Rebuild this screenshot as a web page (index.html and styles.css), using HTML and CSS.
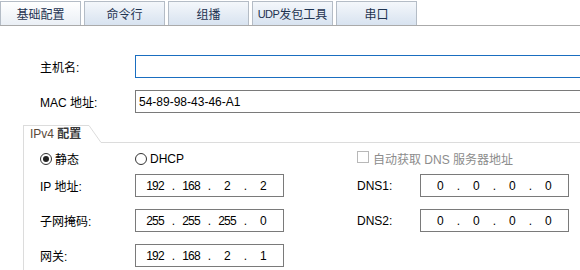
FILE: index.html
```html
<!DOCTYPE html>
<html lang="zh-CN">
<head>
  <meta charset="UTF-8" />
  <title>基础配置</title>
  <link rel="stylesheet" href="styles.css">
</head>
<body>

<div class="tabs">
  <div class="tab active">基础配置</div>
  <div class="tab">命令行</div>
  <div class="tab">组播</div>
  <div class="tab"><span class="latin">UDP</span>发包工具</div>
  <div class="tab">串口</div>
</div>

<div class="form">
  <div class="row">
    <span class="label">主机名:</span>
    <div class="field wide focus"></div>
  </div>
  <div class="row">
    <span class="label">MAC 地址:</span>
    <div class="field wide">54-89-98-43-46-A1</div>
  </div>
</div>

<div class="group">
  <div class="group-head">
    <div class="group-title"><span class="latin">IPv4</span> <b>配置</b></div>
    <svg class="slant" width="12" height="18" viewBox="0 0 12 18">
      <line x1="0" y1="0.5" x2="12" y2="17.5" stroke="#dcdcdc" stroke-width="1" />
    </svg>
    <div class="group-line"></div>
  </div>

  <div class="group-body">
    <div class="grid radios">
      <label class="radio"><span class="circle checked"></span><span>静态</span></label>
      <label class="radio"><span class="circle"></span><span class="latin">DHCP</span></label>
      <label class="check"><span class="box"></span><span>自动获取 DNS 服务器地址</span></label>
    </div>

    <div class="grid fields">
      <span class="label">IP 地址:</span>
      <div class="field ip">
        <span class="oct">192</span><span class="dot">.</span><span class="oct">168</span><span class="dot">.</span><span class="oct">2</span><span class="dot">.</span><span class="oct">2</span>
      </div>
      <span class="label dns">DNS1:</span>
      <div class="field ip">
        <span class="oct">0</span><span class="dot">.</span><span class="oct">0</span><span class="dot">.</span><span class="oct">0</span><span class="dot">.</span><span class="oct">0</span>
      </div>

      <span class="label">子网掩码:</span>
      <div class="field ip">
        <span class="oct">255</span><span class="dot">.</span><span class="oct">255</span><span class="dot">.</span><span class="oct">255</span><span class="dot">.</span><span class="oct">0</span>
      </div>
      <span class="label dns">DNS2:</span>
      <div class="field ip">
        <span class="oct">0</span><span class="dot">.</span><span class="oct">0</span><span class="dot">.</span><span class="oct">0</span><span class="dot">.</span><span class="oct">0</span>
      </div>

      <span class="label">网关:</span>
      <div class="field ip">
        <span class="oct">192</span><span class="dot">.</span><span class="oct">168</span><span class="dot">.</span><span class="oct">2</span><span class="dot">.</span><span class="oct">1</span>
      </div>
    </div>
  </div>
</div>

</body>
</html>
```

FILE: styles.css
```css
body {
  margin: 0;
  height: 270px;
  background: #ffffff;
  font-family: "Liberation Sans", "Noto Sans CJK SC", sans-serif;
  font-size: 12px;
  color: #000000;
  overflow: hidden;
}

/* tab strip */
.tabs {
  display: flex;
  gap: 3px;
  padding-top: 1px;
  border-bottom: 1px solid #aaaaaa;
  box-sizing: border-box;
  height: 26px;
}

.tab {
  width: 81px;
  height: 24px;
  box-sizing: border-box;
  border: 1px solid #b4bcc6;
  border-bottom: none;
  background: linear-gradient(#f4f7fb, #d8e3f0);
  color: #1e3350;
  font-size: 12px;
  display: flex;
  align-items: center;
  justify-content: center;
}

.tab.active {
  background: linear-gradient(#ffffff, #eaeff5);
}

.tab .latin {
  font-size: 11px;
  letter-spacing: -0.5px;
}

/* host / mac rows */
.form {
  padding: 29px 0 0 40px;
  display: flex;
  flex-direction: column;
  gap: 12px;
}

.row {
  display: flex;
  align-items: center;
}

.row .label {
  width: 95px;
  flex: none;
}

.field {
  height: 23px;
  box-sizing: border-box;
  border: 1px solid #7a7a7a;
  background: #ffffff;
  display: flex;
  align-items: center;
}

.field.wide {
  width: 470px;
  flex: none;
  padding-left: 3px;
}

.field.focus {
  border-color: #1a6ec0;
}

/* ipv4 group */
.group {
  margin: 12px 0 0 23px;
}

.group-head {
  display: flex;
  height: 18px;
}

.group-title {
  width: 66px;
  height: 18px;
  box-sizing: border-box;
  border-top: 1px solid #dcdcdc;
  border-left: 1px solid #dcdcdc;
  padding-left: 6px;
  color: #3a3a3a;
  line-height: 17px;
}

.group-title .latin {
  color: #5a4a3a;
}

.group-title b {
  font-weight: bold;
}

.slant {
  display: block;
  flex: none;
}

.group-line {
  flex: 1;
  border-bottom: 1px solid #dcdcdc;
}

.group-body {
  border-left: 1px solid #dcdcdc;
  padding: 7px 0 10px 16px;
}

.grid {
  display: grid;
  grid-template-columns: 95px 149px 73px 63px 149px;
  align-items: center;
}

.radios {
  height: 16px;
  margin-bottom: 8px;
}

.radio,
.check {
  display: flex;
  align-items: center;
}

.check {
  grid-column: 4 / 6;
  color: #8c8c8c;
  white-space: nowrap;
}

.circle {
  width: 12px;
  height: 12px;
  box-sizing: border-box;
  border: 1px solid #333333;
  border-radius: 50%;
  margin-right: 3px;
  display: flex;
  align-items: center;
  justify-content: center;
}

.circle.checked::after {
  content: "";
  width: 6px;
  height: 6px;
  border-radius: 50%;
  background: #222222;
}

.box {
  width: 12px;
  height: 12px;
  box-sizing: border-box;
  border: 1px solid #b8b8b8;
  margin-right: 4px;
  margin-top: -4px;
}

.fields {
  grid-auto-rows: 23px;
  row-gap: 12px;
}

.fields .dns {
  grid-column: 4;
}

.field.ip {
  padding-left: 5px;
  font-size: 12px;
  letter-spacing: -0.8px;
}

.oct {
  width: 28px;
  text-align: center;
}

.dot {
  width: 8px;
  text-align: center;
}
```
